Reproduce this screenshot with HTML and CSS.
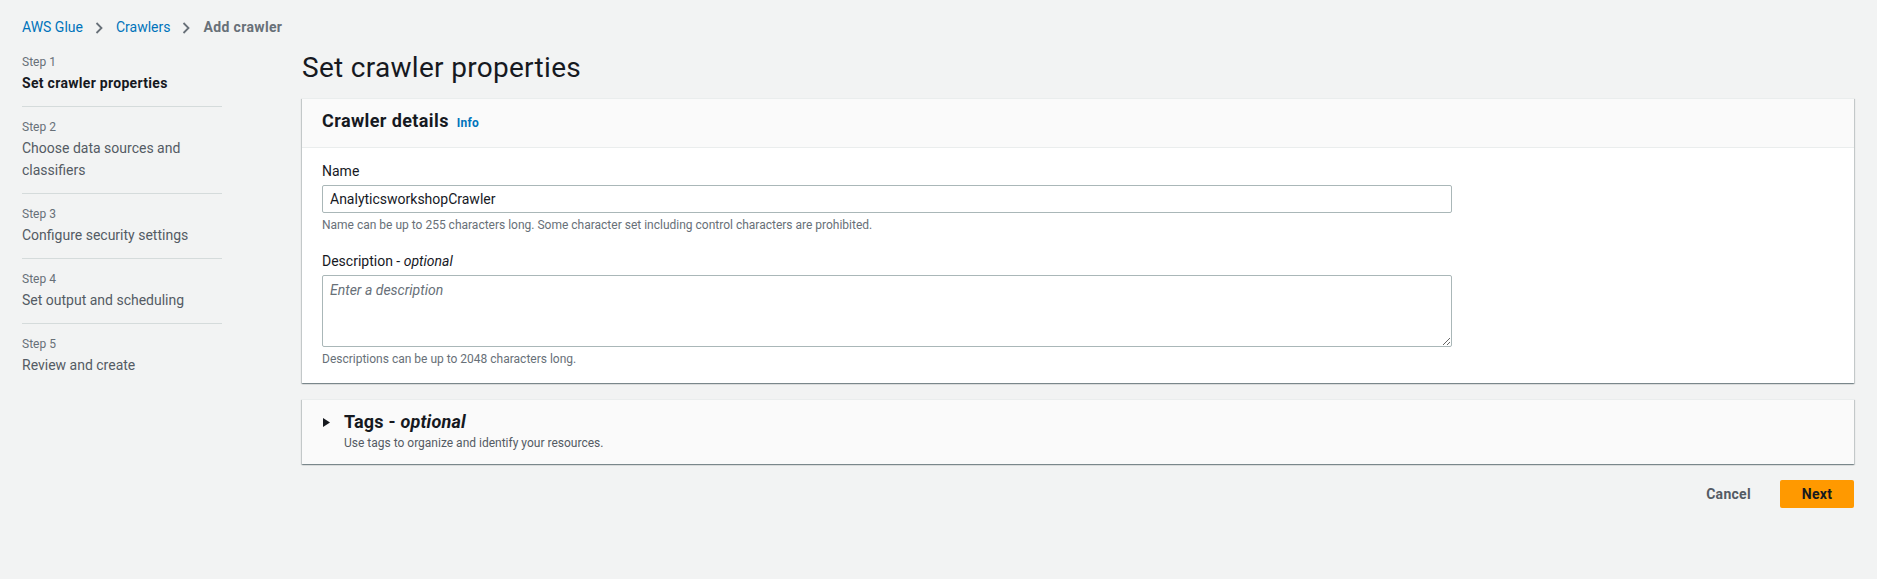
FILE: index.html
```html
<!DOCTYPE html>
<html lang="en">
<head>
<meta charset="utf-8">
<title>Add crawler</title>
<link rel="stylesheet" href="styles.css">
</head>
<body>
<div class="page">
  <nav class="breadcrumbs">
    <a class="crumb-link" href="#">AWS Glue</a>
    <svg class="chev" viewBox="0 0 8 12" width="8" height="12"><path d="M1.5 1l5 5-5 5" fill="none" stroke="#687078" stroke-width="1.8"/></svg>
    <a class="crumb-link" href="#">Crawlers</a>
    <svg class="chev" viewBox="0 0 8 12" width="8" height="12"><path d="M1.5 1l5 5-5 5" fill="none" stroke="#687078" stroke-width="1.8"/></svg>
    <span class="crumb-current">Add crawler</span>
  </nav>
  <div class="layout">
    <ul class="steps">
      <li class="step active"><span class="step-num">Step 1</span><span class="step-name">Set crawler properties</span></li>
      <li class="step"><span class="step-num">Step 2</span><span class="step-name">Choose data sources and classifiers</span></li>
      <li class="step"><span class="step-num">Step 3</span><span class="step-name">Configure security settings</span></li>
      <li class="step"><span class="step-num">Step 4</span><span class="step-name">Set output and scheduling</span></li>
      <li class="step last"><span class="step-num">Step 5</span><span class="step-name">Review and create</span></li>
    </ul>
    <main class="main">
      <h1 class="title">Set crawler properties</h1>
      <section class="card">
        <div class="card-header">
          <h2 class="card-title">Crawler details</h2>
          <a class="info" href="#">Info</a>
        </div>
        <div class="card-body">
          <div class="field">
            <label class="label">Name</label>
            <input class="input" type="text" value="AnalyticsworkshopCrawler">
            <div class="hint">Name can be up to 255 characters long. Some character set including control characters are prohibited.</div>
          </div>
          <div class="field">
            <label class="label">Description - <i>optional</i></label>
            <textarea class="textarea" placeholder="Enter a description"></textarea>
            <div class="hint">Descriptions can be up to 2048 characters long.</div>
          </div>
        </div>
      </section>
      <section class="card tags">
        <div class="tags-head">
          <svg class="caret" viewBox="0 0 7 9" width="7" height="9"><path d="M0 0L7 4.5L0 9Z" fill="#16191f"/></svg>
          <div>
            <h2 class="tags-title">Tags - <i>optional</i></h2>
            <div class="tags-desc">Use tags to organize and identify your resources.</div>
          </div>
        </div>
      </section>
      <div class="actions">
        <button class="btn-link" type="button">Cancel</button>
        <button class="btn-primary" type="button">Next</button>
      </div>
    </main>
  </div>
</div>
</body>
</html>
```
FILE: styles.css
```css
* { box-sizing: border-box; }
html, body { margin: 0; padding: 0; }
body {
  background: #f2f3f3;
  font-family: Roboto, "Liberation Sans", sans-serif;
  color: #16191f;
  font-size: 14px;
  line-height: 22px;
}
.page {
  padding: 17px 23px 0 22px;
}
.breadcrumbs {
  display: flex;
  align-items: center;
  height: 20px;
  font-size: 14px;
  line-height: 20px;
}
.crumb-link { color: #0073bb; text-decoration: none; }
.chev { margin: 1px 13px 0 12px; }
.crumb-current { color: #687078; font-weight: 700; letter-spacing: 0.35px; }
.layout {
  display: grid;
  grid-template-columns: 200px 1fr;
  column-gap: 80px;
  margin-top: 13px;
}
.steps {
  list-style: none;
  margin: 0;
  padding: 4px 0 0 0;
}
.step {
  display: flex;
  flex-direction: column;
  padding: 0 0 12px 0;
  margin-bottom: 12px;
  border-bottom: 1px solid #d5dbdb;
}
.step.last { border-bottom: none; }
.step-num {
  font-size: 12px;
  line-height: 16px;
  color: #687078;
  margin-bottom: 2px;
}
.step-name { color: #545b64; font-size: 14px; line-height: 22px; }
.step.active .step-name { color: #16191f; font-weight: 700; letter-spacing: 0.3px; }
.main { min-width: 0; }
.title {
  margin: 0 0 12px 0;
  font-size: 28px;
  line-height: 36px;
  font-weight: 400;
  letter-spacing: 0.3px;
  color: #16191f;
}
.card {
  background: #fff;
  border-top: 1px solid #eaeded;
  box-shadow: 0 1px 1px 0 rgba(0,28,36,.3), 1px 1px 1px 0 rgba(0,28,36,.15), -1px 1px 1px 0 rgba(0,28,36,.15);
}
.card-header {
  display: flex;
  align-items: baseline;
  gap: 8px;
  background: #fafafa;
  border-bottom: 1px solid #eaeded;
  padding: 10px 20px 13px 20px;
}
.card-title { margin: 0; font-size: 18px; line-height: 24px; font-weight: 700; letter-spacing: 0.4px; }
.info { color: #0073bb; font-size: 12px; font-weight: 700; text-decoration: none; letter-spacing: 0.2px; }
.card-body { padding: 12px 20px 16px 20px; }
.field + .field { margin-top: 17px; }
.label { display: block; font-size: 14px; line-height: 22px; margin-bottom: 3px; }
.input, .textarea {
  display: block;
  width: calc(75% - 4px);
  border: 1px solid #aab7b8;
  border-radius: 2px;
  background: #fff;
  font-family: inherit;
  font-size: 14px;
  line-height: 20px;
  color: #16191f;
  padding: 3px 7px;
  margin: 0;
}
.input { height: 28px; }
.textarea { height: 72px; padding: 4px 7px; resize: vertical; }
.textarea::placeholder { color: #687078; font-style: italic; }
.hint {
  font-size: 12px;
  line-height: 16px;
  color: #687078;
  margin-top: 4px;
}
.tags { margin-top: 16px; background: #fafafa; }
.tags-head {
  display: flex;
  align-items: flex-start;
  padding: 10px 20px 13px 21px;
}
.caret { margin: 8px 14px 0 0; flex: none; }
.tags-title { margin: 0; font-size: 18px; line-height: 24px; font-weight: 700; letter-spacing: 0.2px; }
.tags-desc { font-size: 12px; line-height: 16px; color: #545b64; margin-top: 1px; }
.actions {
  display: flex;
  justify-content: flex-end;
  align-items: center;
  gap: 29px;
  margin-top: 16px;
}
.btn-link {
  background: none;
  border: none;
  font-family: inherit;
  font-size: 14px;
  font-weight: 700;
  letter-spacing: 0.3px;
  color: #545b64;
  padding: 0;
}
.btn-primary {
  background: #ff9900;
  border: none;
  border-radius: 2px;
  font-family: inherit;
  font-size: 14px;
  font-weight: 700;
  letter-spacing: 0.3px;
  color: #16191f;
  height: 28px;
  width: 74px;
  padding: 0;
}
```
